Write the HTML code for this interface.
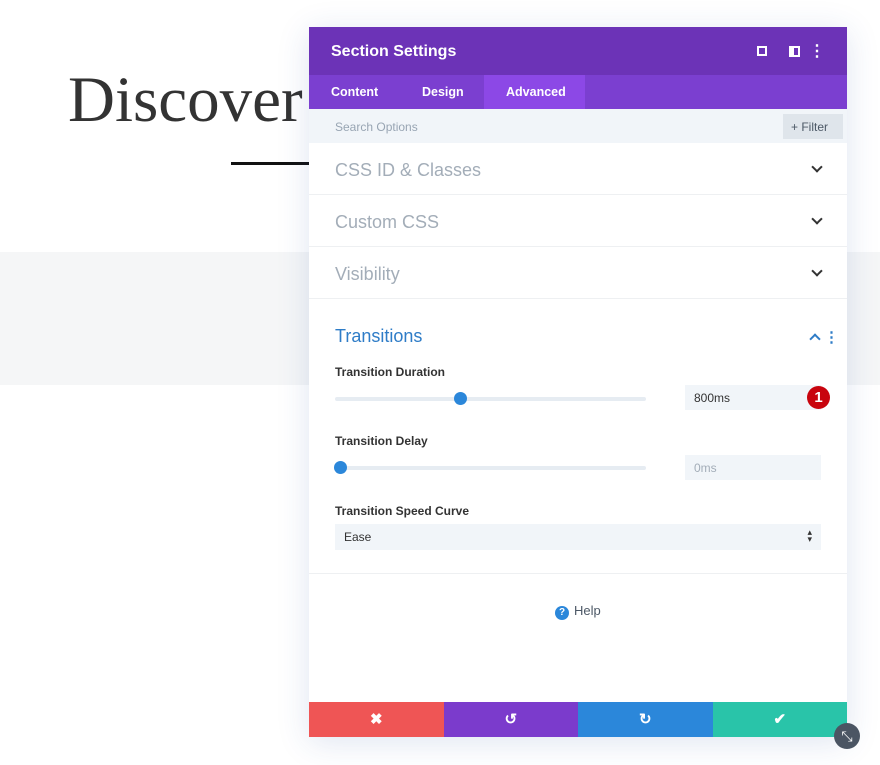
<!DOCTYPE html>
<html><head><style>
*{box-sizing:border-box;margin:0;padding:0}
body{width:880px;height:765px;position:relative;background:#fff;font-family:"Liberation Sans",sans-serif;overflow:hidden}
.band{position:absolute;left:0;top:252px;width:880px;height:133px;background:#f5f6f7}
.disc{position:absolute;left:68px;top:63px;font-family:"Liberation Serif",serif;font-size:65px;color:#333}
.line{position:absolute;left:231px;top:162px;width:80px;height:3px;background:#111}
.panel{position:absolute;left:309px;top:27px;width:538px;height:710px;background:#fff;box-shadow:0 5px 30px rgba(40,80,160,.15)}
.hd{height:48px;background:#6c33b7;color:#fff;font-size:16px;font-weight:bold;padding:16px 22px;position:relative}
.tabs{height:34px;background:#7b3fd0;display:flex;font-size:12.5px;font-weight:bold;color:#fff}
.tabs div{padding:10px 0 10px 22px}
.tabs .on{background:#8c48e6}
.search{height:34px;background:#f1f5f9;position:relative;color:#98a5b3;font-size:12px;padding:11px 26px}
.filter{position:absolute;right:4px;top:5px;width:60px;height:25px;background:#dfe5eb;color:#4c5866;font-size:12px;padding:6px 8px}
.sec{height:52px;border-bottom:1px solid #eef0f2;color:#a3adb8;font-size:18px;padding:17px 26px 0;position:relative}
.chev{position:absolute;right:26px;top:20px;width:8px;height:8px;border-right:2px solid #333;border-bottom:2px solid #333;transform:rotate(45deg)}
.lbl{position:absolute;left:26px;font-size:12px;font-weight:bold;color:#333}
.track{position:absolute;left:26px;width:311px;height:4px;background:#e6ecf2;border-radius:2px}
.knob{position:absolute;width:13px;height:13px;border-radius:50%;background:#2b87da}
.inp{position:absolute;left:376px;width:136px;height:25px;background:#f1f5f9;font-size:12px;padding:6px 9px;color:#333}
.btns{position:absolute;left:0;bottom:0;width:538px;height:35px;display:flex}
.btns div{flex:1;color:#fff;font-weight:bold;font-size:15px;text-align:center;line-height:35px}
</style></head><body>
<div class="band"></div>
<div class="disc">Discover</div>
<div class="line"></div>
<div class="panel">
<div class="hd">Section Settings
<span style="position:absolute;right:80px;top:19px;width:10px;height:10px;border:2px dashed #fff"></span>
<span style="position:absolute;right:47px;top:19px;width:11px;height:11px;border:2px solid #fff;border-left-width:5px"></span>
<span style="position:absolute;right:22px;top:14px;font-size:16px">⋮</span></div>
<div class="tabs"><div style="width:91px">Content</div><div style="width:84px">Design</div><div class="on" style="width:101px">Advanced</div></div>
<div class="search">Search Options<div class="filter">+ Filter</div></div>
<div class="sec">CSS ID &amp; Classes<span class="chev"></span></div>
<div class="sec">Custom CSS<span class="chev"></span></div>
<div class="sec">Visibility<span class="chev"></span></div>
<div style="position:relative;height:275px;border-bottom:1px solid #eef0f2">
<div style="position:absolute;left:26px;top:27px;font-size:18px;color:#2e7cc7">Transitions</div>
<span style="position:absolute;right:28px;top:36px;width:8px;height:8px;border-left:2px solid #2e7cc7;border-top:2px solid #2e7cc7;transform:rotate(45deg)"></span>
<span style="position:absolute;right:8px;top:29px;color:#2e7cc7;font-size:15px;font-weight:bold">⋮</span>
<div class="lbl" style="top:66px">Transition Duration</div>
<div class="track" style="top:98px"></div><div class="knob" style="left:145px;top:93px"></div>
<div class="inp" style="top:86px">800ms</div>
<div style="position:absolute;left:498px;top:87px;width:23px;height:23px;border-radius:50%;background:#c8040e;color:#fff;font-weight:bold;font-size:15px;text-align:center;line-height:23px">1</div>
<div class="lbl" style="top:135px">Transition Delay</div>
<div class="track" style="top:167px"></div><div class="knob" style="left:25px;top:162px"></div>
<div class="inp" style="top:156px;color:#a3adb8">0ms</div>
<div class="lbl" style="top:205px">Transition Speed Curve</div>
<div class="inp" style="top:225px;left:26px;width:486px;height:26px">Ease<span style="position:absolute;right:9px;top:5px;font-size:9px;line-height:7px">▴<br>▾</span></div>
</div>
<div style="position:absolute;left:246px;top:576px;font-size:13px;color:#4c5866"><span style="display:inline-block;width:14px;height:14px;border-radius:50%;background:#2b87da;color:#fff;font-size:10px;text-align:center;line-height:14px;font-weight:bold;margin-right:5px">?</span>Help</div>
<div class="btns"><div style="background:#ef5555">✖</div><div style="background:#7b3bcc">↺</div><div style="background:#2b87da">↻</div><div style="background:#29c4a9">✔</div></div>
</div>
<div style="position:absolute;left:834px;top:723px;width:26px;height:26px;border-radius:50%;background:#4b5563;color:#fff;text-align:center;line-height:26px;font-size:14px">⤡</div>
</body></html>
